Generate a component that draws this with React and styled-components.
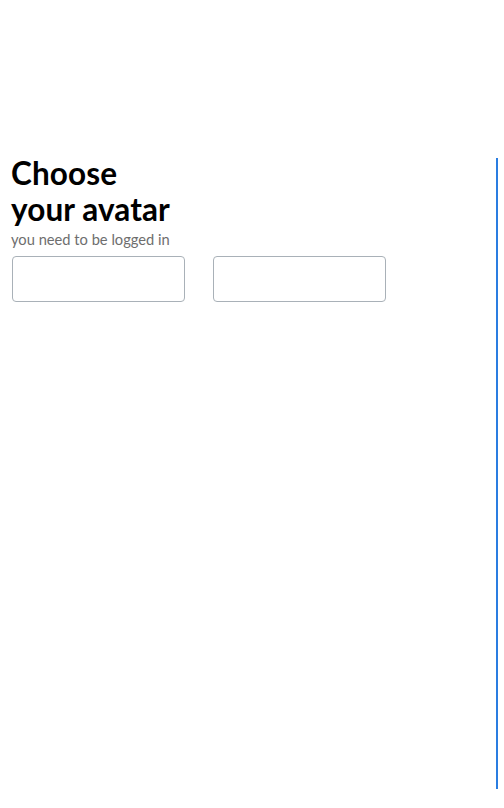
import styled, { createGlobalStyle } from "styled-components";

const GlobalStyle = createGlobalStyle`
  body {
    margin: 0;
    background: #ffffff;
    font-family: Lato, "Open Sans", sans-serif;
  }
`;

const Page = styled.div`
  display: flex;
  padding: 158px 6px 0 11px;
`;

const Panel = styled.div`
  flex: 1;
  height: 631px;
  border-right: 2px solid #2a7de1;
`;

const Title = styled.h1`
  margin: -3px 0 0 0;
  font-size: 31.5px;
  line-height: 36px;
  font-weight: 700;
  color: #000000;
  letter-spacing: 0.1px;
`;

const Subtitle = styled.p`
  margin: 3px 0 0 0;
  font-size: 14.7px;
  line-height: 18px;
  color: #6e6e6e;
`;

const Fields = styled.div`
  display: flex;
  gap: 28px;
  margin-top: 8px;
  padding-left: 1px;
`;

const Field = styled.input`
  box-sizing: border-box;
  width: 173px;
  height: 46px;
  border: 1px solid #a9b1b8;
  border-radius: 4px;
  background: #ffffff;
  padding: 0 10px;
  font-family: inherit;
  font-size: 14px;
  outline: none;
`;

function App() {
  return (
    <>
      <GlobalStyle />
      <Page>
        <Panel>
          <Title>
            Choose
            <br />
            your avatar
          </Title>
          <Subtitle>you need to be logged in</Subtitle>
          <Fields>
            <Field type="text" />
            <Field type="text" />
          </Fields>
        </Panel>
      </Page>
    </>
  );
}

export default App;
